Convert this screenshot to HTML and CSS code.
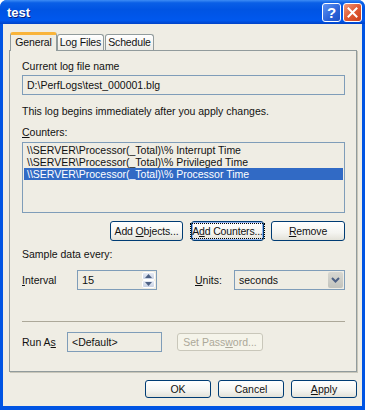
FILE: index.html
```html
<!DOCTYPE html>
<html lang="en">
<head>
    <meta charset="UTF-8">
    <title>test</title>
    <link rel="stylesheet" href="styles.css">
</head>
<body>
    <!-- Dialog window -->
    <div class="window">
        <div class="titlebar">
            <span class="title">test</span>
            <div class="caption-buttons">
                <button class="cap help">?</button>
                <button class="cap close">
                    <svg width="11" height="11" viewBox="0 0 11 11">
                        <path d="M1.5 1.5 L9.5 9.5 M9.5 1.5 L1.5 9.5" stroke="#fff" stroke-width="2" stroke-linecap="square"/>
                    </svg>
                </button>
            </div>
        </div>

        <div class="client">
            <!-- Tabs -->
            <div class="tabs">
                <div class="tab active">General</div>
                <div class="tab">Log Files</div>
                <div class="tab">Schedule</div>
            </div>

            <!-- General page -->
            <div class="panel">
                <div class="label first">Current log file name</div>
                <div class="field">D:\PerfLogs\test_000001.blg</div>
                <p class="note">This log begins immediately after you apply changes.</p>

                <div class="label counters"><u>C</u>ounters:</div>
                <div class="listbox">
                    <div class="row">\\SERVER\Processor(_Total)\% Interrupt Time</div>
                    <div class="row">\\SERVER\Processor(_Total)\% Privileged Time</div>
                    <div class="row selected">\\SERVER\Processor(_Total)\% Processor Time</div>
                </div>

                <div class="button-row">
                    <button class="btn">Add <u>O</u>bjects...</button>
                    <button class="btn focused"><span>A<u>d</u>d Counters...</span></button>
                    <button class="btn"><u>R</u>emove</button>
                </div>

                <div class="label sample">Sample data every:</div>
                <div class="sample-row">
                    <span><u>I</u>nterval</span>
                    <div class="spin">
                        <span class="spin-value">15</span>
                        <div class="spin-btns">
                            <span class="spin-btn">
                                <svg width="7" height="4" viewBox="0 0 7 4"><path d="M3.5 0 L7 4 L0 4 Z" fill="#4d6185"/></svg>
                            </span>
                            <span class="spin-btn">
                                <svg width="7" height="4" viewBox="0 0 7 4"><path d="M0 0 L7 0 L3.5 4 Z" fill="#4d6185"/></svg>
                            </span>
                        </div>
                    </div>
                    <span class="units-label"><u>U</u>nits:</span>
                    <div class="combo">
                        <span>seconds</span>
                        <span class="combo-btn">
                            <svg width="9" height="6" viewBox="0 0 9 6"><path d="M1 1 L4.5 4.5 L8 1" fill="none" stroke="#4d6185" stroke-width="2"/></svg>
                        </span>
                    </div>
                </div>

                <div class="separator"></div>

                <div class="runas-row">
                    <span>Run A<u>s</u></span>
                    <div class="field runas">&lt;Default&gt;</div>
                    <button class="btn disabled">Set Pass<u>w</u>ord...</button>
                </div>
            </div>

            <!-- Dialog buttons -->
            <div class="footer">
                <button class="btn">OK</button>
                <button class="btn">Cancel</button>
                <button class="btn"><u>A</u>pply</button>
            </div>
        </div>
    </div>
</body>
</html>
```

FILE: styles.css
```css
/* General Styles */
* {
    margin: 0;
    padding: 0;
    box-sizing: border-box;
}

body {
    font-family: Tahoma, 'Liberation Sans', Arial, sans-serif;
    font-size: 10.5px;
    color: #111;
    background: #fff;
}

u {
    text-decoration: underline;
}

/* Window frame */
.window {
    width: 365px;
    height: 410px;
    display: flex;
    flex-direction: column;
    background: #0054e3;
    border-radius: 7px 7px 0 0;
}

.titlebar {
    height: 24px;
    display: flex;
    align-items: center;
    justify-content: space-between;
    padding: 0 3px 0 7px;
    border-radius: 7px 7px 0 0;
    background: linear-gradient(#3d8cf5 0%, #0a5fe6 12%, #0054e3 40%, #0058ee 85%, #0042c8 100%);
}

.title {
    color: #fff;
    font-family: 'Liberation Sans', Arial, sans-serif;
    font-weight: bold;
    font-size: 13px;
    text-shadow: 1px 1px 0 #0a1f7a;
    margin-top: 1px;
}

.caption-buttons {
    display: flex;
    gap: 2px;
    margin-top: 1px;
}

.cap {
    width: 19px;
    height: 19px;
    border: 1px solid #fff;
    border-radius: 3px;
    display: flex;
    align-items: center;
    justify-content: center;
    color: #fff;
}

.help {
    background: linear-gradient(135deg, #5f94f4, #2b63d8 60%, #1d4fc4);
    font-family: 'Liberation Sans', Arial, sans-serif;
    font-weight: bold;
    font-size: 15px;
}

.close {
    background: linear-gradient(135deg, #f09a7c, #e05a34 50%, #c9401c);
}

/* Dialog client area */
.client {
    flex: 1;
    margin: 0 3px 4px;
    background: #efede4;
    padding: 8px 5px 0 6px;
    display: flex;
    flex-direction: column;
}

.tabs {
    display: flex;
    align-items: flex-end;
    height: 18px;
    padding-left: 1px;
}

.tab {
    height: 16px;
    border: 1px solid #919b9c;
    border-bottom: none;
    border-radius: 3px 3px 0 0;
    background: linear-gradient(#fff, #ecebe6);
    line-height: 15px;
    text-align: center;
    white-space: nowrap;
    letter-spacing: -0.15px;
}

.tab.active {
    height: 19px;
    margin-bottom: -1px;
    border-top: 3px solid #f9b43a;
    background: #efede4;
    position: relative;
    z-index: 1;
    line-height: 14px;
    width: 47px;
}

.tab:nth-child(2) {
    width: 47px;
}

.tab:nth-child(3) {
    width: 49px;
    margin-left: 1px;
}

.panel {
    height: 322px;
    border: 1px solid #919b9c;
    box-shadow: 1px 1px 0 #c9c7ba;
    padding: 0 11px 0 12px;
    display: flex;
    flex-direction: column;
    line-height: 13px;
}

.label.first {
    margin-top: 9px;
}

.field {
    height: 20px;
    border: 1px solid #7f9db9;
    padding: 0 4px;
    display: flex;
    align-items: center;
    margin-top: 2px;
    white-space: nowrap;
}

.note {
    margin-top: 10px;
}

.label.counters {
    margin-top: 8px;
}

.listbox {
    height: 71px;
    margin-top: 3px;
    border: 1px solid #7f9db9;
    padding: 1px 1px;
}

.row {
    height: 12px;
    line-height: 12px;
    padding-left: 3px;
    white-space: nowrap;
}

.row.selected {
    background: #316ac5;
    color: #fff;
}

/* Buttons */
.btn {
    font-family: inherit;
    font-size: 10.5px;
    color: #111;
    height: 19px;
    border: 1px solid #003c74;
    border-radius: 3px;
    background: linear-gradient(#fff 0%, #f4f4f0 60%, #e3e2d9 100%);
    text-align: center;
    white-space: nowrap;
}

.button-row {
    display: flex;
    justify-content: flex-end;
    gap: 8px;
    margin-top: 8px;
}

.button-row .btn {
    width: 73px;
    height: 20px;
    letter-spacing: -0.15px;
}

.button-row .btn:last-child {
    width: 74px;
    margin-left: -1px;
}

.btn.focused {
    box-shadow: inset 0 0 0 1px #8fb2ef;
}

.btn.focused span {
    outline: 1px dotted #000;
    outline-offset: 1px;
}

.btn.disabled {
    color: #aca899;
    border-color: #c9c7ba;
    background: #f5f4ea;
}

.label.sample {
    margin-top: 7px;
}

.sample-row {
    display: grid;
    grid-template-columns: 55px 80px 1fr 111px;
    align-items: center;
    margin-top: 9px;
}

.spin {
    height: 20px;
    border: 1px solid #7f9db9;
    display: flex;
    align-items: center;
    justify-content: space-between;
    padding: 1px 1px 1px 4px;
}

.spin-value {
    font-size: 11px;
}

.spin-btns {
    display: flex;
    flex-direction: column;
    width: 13px;
    height: 16px;
}

.spin-btn {
    flex: 1;
    display: flex;
    align-items: center;
    justify-content: center;
    background: linear-gradient(#e6ebf4, #c8d2e4);
    border: 1px solid #fff;
    border-radius: 2px;
}

.units-label {
    padding-left: 38px;
}

.combo {
    height: 20px;
    border: 1px solid #7f9db9;
    display: flex;
    align-items: center;
    justify-content: space-between;
    padding: 1px 1px 1px 4px;
}

.combo-btn {
    width: 15px;
    height: 16px;
    background: linear-gradient(#d8d8d2, #c2c3bd);
    border-radius: 2px;
    display: flex;
    align-items: center;
    justify-content: center;
}

.separator {
    height: 1px;
    background: #aca899;
    margin-top: 31px;
}

.runas-row {
    display: flex;
    align-items: center;
    margin-top: 10px;
}

.runas-row > span {
    width: 45px;
}

.field.runas {
    width: 95px;
    margin-top: 0;
}

.runas-row .btn {
    width: 86px;
    height: 18px;
    margin-left: 15px;
}

/* Bottom buttons */
.footer {
    display: flex;
    justify-content: flex-end;
    gap: 7px;
    margin-top: 8px;
}

.footer .btn {
    width: 66px;
    height: 18px;
}
```
